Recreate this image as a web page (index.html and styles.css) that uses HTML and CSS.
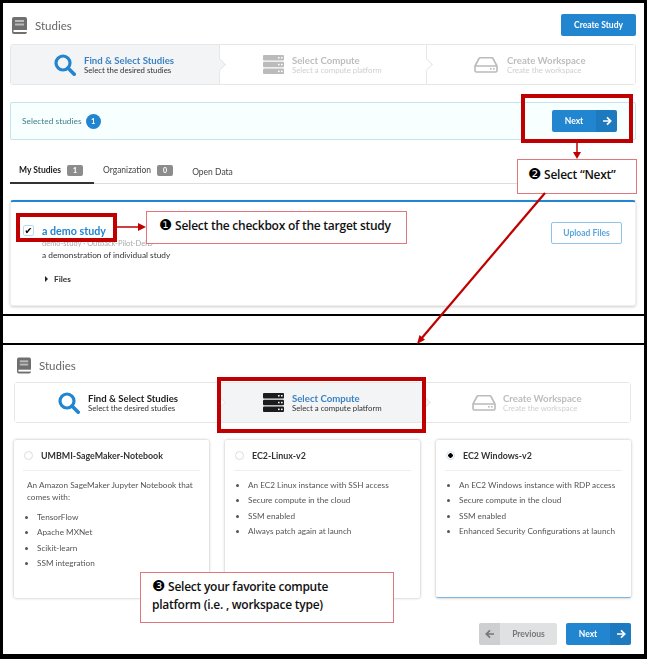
FILE: index.html
```html
<!DOCTYPE html>
<html>
<head>
    <meta charset="utf-8">
    <title>Studies</title>
    <link rel="stylesheet" href="styles.css">
</head>
<body>
    <svg width="0" height="0" class="defs">
        <symbol id="book" viewBox="0 0 15 17">
            <rect width="15" height="17" rx="2" fill="#6f6f6f"/>
            <rect x="3" y="3" width="9" height="2" fill="#bbb"/>
            <rect x="3" y="6.5" width="9" height="2" fill="#bbb"/>
            <rect x="1.5" y="13" width="13.5" height="2" fill="#fff"/>
        </symbol>
        <symbol id="search" viewBox="0 0 22 22">
            <circle cx="9" cy="9" r="7" fill="none" stroke="currentColor" stroke-width="3.2"/>
            <path d="M14 14l6.2 6.2" stroke="currentColor" stroke-width="3.6" stroke-linecap="round"/>
        </symbol>
        <symbol id="server" viewBox="0 0 21 19">
            <g fill="currentColor">
                <rect width="21" height="5.4" rx="1"/>
                <rect y="6.8" width="21" height="5.4" rx="1"/>
                <rect y="13.6" width="21" height="5.4" rx="1"/>
            </g>
            <g fill="#fff">
                <rect x="15" y="2" width="1.6" height="1.5"/><rect x="18" y="2" width="1.6" height="1.5"/>
                <rect x="15" y="8.8" width="1.6" height="1.5"/><rect x="18" y="8.8" width="1.6" height="1.5"/>
                <rect x="15" y="15.6" width="1.6" height="1.5"/><rect x="18" y="15.6" width="1.6" height="1.5"/>
            </g>
        </symbol>
        <symbol id="disk" viewBox="0 0 24 16">
            <path d="M1 9L5 1.5C5.300 1 5.700.8 6.200.8h11.600c.5 0 .9.200 1.200.7L23 9v4.500c0 .9-.7 1.500-1.500 1.500h-19C1.700 15 1 14.400 1 13.500zM1 9h22" fill="none" stroke="currentColor" stroke-width="1.600"/>
            <rect x="16" y="11" width="1.600" height="1.600" fill="currentColor"/>
            <rect x="19" y="11" width="1.600" height="1.600" fill="currentColor"/>
        </symbol>
        <symbol id="arrow" viewBox="0 0 10 10">
            <path d="M1 5h7.500M5 1.300L8.700 5 5 8.700" fill="none" stroke="currentColor" stroke-width="1.700"/>
        </symbol>
    </svg>

    <!-- first screenshot: choosing a study -->
    <section class="panel panel-top">
        <header class="page-head">
            <svg class="book"><use href="#book"/></svg>
            <span class="page-title">Studies</span>
            <button class="btn create">Create Study</button>
        </header>

        <div class="steps">
            <div class="step active">
                <svg class="ico-search"><use href="#search"/></svg>
                <div>
                    <div class="step-title">Find &amp; Select Studies</div>
                    <div class="step-sub">Select the desired studies</div>
                </div>
            </div>
            <div class="step off">
                <svg class="ico-server"><use href="#server"/></svg>
                <div>
                    <div class="step-title">Select Compute</div>
                    <div class="step-sub">Select a compute platform</div>
                </div>
            </div>
            <div class="step off last">
                <svg class="ico-disk"><use href="#disk"/></svg>
                <div>
                    <div class="step-title">Create Workspace</div>
                    <div class="step-sub">Create the workspace</div>
                </div>
            </div>
        </div>

        <div class="selected">
            <span>Selected studies</span>
            <span class="count">1</span>
            <div class="split next">
                <span class="split-label">Next</span>
                <span class="split-arrow"><svg><use href="#arrow"/></svg></span>
            </div>
        </div>

        <nav class="tabs">
            <a class="tab current">My Studies <b>1</b></a>
            <a class="tab">Organization <b>0</b></a>
            <a class="tab plain">Open Data</a>
        </nav>

        <article class="study">
            <div class="study-main">
                <div class="study-name">
                    <span class="check">✔</span>
                    <span>a demo study</span>
                </div>
                <div class="study-id">demo-study · Outback-Pilot-DeID</div>
                <div class="study-desc">a demonstration of individual study</div>
                <div class="study-files"><i></i>Files</div>
            </div>
            <button class="btn outline">Upload Files</button>
        </article>
    </section>

    <div class="strip"></div>

    <!-- second screenshot: choosing a compute platform -->
    <section class="panel panel-bottom">
        <header class="page-head">
            <svg class="book"><use href="#book"/></svg>
            <span class="page-title">Studies</span>
        </header>

        <div class="steps">
            <div class="step done">
                <svg class="ico-search"><use href="#search"/></svg>
                <div>
                    <div class="step-title">Find &amp; Select Studies</div>
                    <div class="step-sub">Select the desired studies</div>
                </div>
            </div>
            <div class="step active dark">
                <svg class="ico-server"><use href="#server"/></svg>
                <div>
                    <div class="step-title">Select Compute</div>
                    <div class="step-sub">Select a compute platform</div>
                </div>
            </div>
            <div class="step off last">
                <svg class="ico-disk"><use href="#disk"/></svg>
                <div>
                    <div class="step-title">Create Workspace</div>
                    <div class="step-sub">Create the workspace</div>
                </div>
            </div>
        </div>

        <div class="cards">
            <div class="card">
                <div class="card-head"><span class="radio"></span>UMBMI-SageMaker-Notebook</div>
                <p>An Amazon SageMaker Jupyter Notebook that comes with:</p>
                <ul>
                    <li>TensorFlow</li>
                    <li>Apache MXNet</li>
                    <li>Scikit-learn</li>
                    <li>SSM integration</li>
                </ul>
            </div>
            <div class="card">
                <div class="card-head"><span class="radio"></span>EC2-Linux-v2</div>
                <ul>
                    <li>An EC2 Linux instance with SSH access</li>
                    <li>Secure compute in the cloud</li>
                    <li>SSM enabled</li>
                    <li>Always patch again at launch</li>
                </ul>
            </div>
            <div class="card picked">
                <div class="card-head"><span class="radio on"></span>EC2 Windows-v2</div>
                <ul>
                    <li>An EC2 Windows instance with RDP access</li>
                    <li>Secure compute in the cloud</li>
                    <li>SSM enabled</li>
                    <li>Enhanced Security Configurations at launch</li>
                </ul>
            </div>
        </div>

        <footer class="actions">
            <div class="split prev">
                <span class="split-arrow"><svg class="flip"><use href="#arrow"/></svg></span>
                <span class="split-label">Previous</span>
            </div>
            <div class="split next">
                <span class="split-label">Next</span>
                <span class="split-arrow"><svg><use href="#arrow"/></svg></span>
            </div>
        </footer>
    </section>

    <!-- annotations drawn on top of the screenshots -->
    <div class="mark mark-next"></div>
    <div class="mark mark-check"></div>
    <div class="mark mark-compute"></div>
    <div class="note note-one"><span class="num">❶</span> Select the checkbox of the target study</div>
    <div class="note note-two"><span class="num">❷</span> Select “Next”</div>
    <div class="note note-three"><span class="num">❸</span> Select your favorite compute<br>platform (i.e. , workspace type)</div>
    <svg class="arrows" width="647" height="659">
        <g stroke="#c00000" fill="none">
            <path d="M117 227H139M577 143V153" stroke-width="1.500"/>
            <path d="M545 193L421 339" stroke-width="2.200"/>
        </g>
        <g fill="#c00000">
            <path d="M146 227l-8-4v8z"/>
            <path d="M577 159l-4-7h8z"/>
            <path d="M417 344l2.500-9 5.500 4.700z"/>
        </g>
    </svg>
</body>
</html>
```

FILE: styles.css
```css
html {
    background: #000;
}

body {
    position: relative;
    margin: 0;
    padding: 3px 3px 0;
    width: 641px;
    height: 656px;
    font-family: Lato, "Open Sans", sans-serif;
    color: #444;
    background: #000;
    overflow: hidden;
}

.defs {
    position: absolute;
}

/* the source picture is a soft, scaled-up screenshot */
.panel {
    background: #fff;
    box-sizing: border-box;
    filter: blur(.35px);
}

.panel-top {
    height: 311px;
    padding: 11px 8px 0 7px;
}

.panel-bottom {
    height: 309px;
    padding: 12px 13px 0 11px;
}

.strip {
    height: 27px;
    margin: 2px 0;
    background: #fff;
}

/* page header */
.page-head {
    display: flex;
    align-items: center;
    height: 22px;
    margin-bottom: 8px;
    padding-left: 2px;
}

.panel-bottom .page-head {
    padding-left: 3px;
    height: 16px;
    margin-bottom: 9px;
}

.book {
    width: 15px;
    height: 17px;
    margin-right: 8px;
}

.panel-bottom .book {
    width: 14px;
    margin-right: 8px;
}

.page-title {
    font-size: 11.500px;
    color: #666;
}

.btn {
    font-family: inherit;
    font-size: 8.500px;
    font-weight: 700;
    border-radius: 2px;
    cursor: pointer;
}

.create {
    margin-left: auto;
    width: 75px;
    height: 22px;
    padding: 0;
    color: #fff;
    background: #2185d0;
    border: none;
}

/* stepper */
.steps {
    display: grid;
    grid-template-columns: 209px 207px 1fr;
    height: 41px;
    border: 1px solid #e6e7e8;
    border-radius: 3px;
    box-sizing: border-box;
}

.panel-bottom .steps {
    grid-template-columns: 205px 205px 1fr;
}

.step {
    position: relative;
    display: flex;
    align-items: center;
    padding-left: 43px;
    border-right: 1px solid #e6e7e8;
}

.step.last {
    padding-left: 47px;
    border-right: none;
}

.step::after {
    content: "";
    position: absolute;
    right: -5px;
    top: 15px;
    width: 8px;
    height: 8px;
    background: inherit;
    border-top: 1px solid #e6e7e8;
    border-right: 1px solid #e6e7e8;
    transform: rotate(45deg);
    z-index: 1;
}

.step.last::after {
    display: none;
}

.step.active {
    background: #f3f4f5;
}

.step:not(.active) {
    background: #fff;
}

.ico-search {
    width: 22px;
    height: 22px;
    margin-right: 8px;
    color: #2185d0;
}

.ico-server {
    width: 21px;
    height: 19px;
    margin-right: 8px;
    color: #1b1c1d;
}

.ico-disk {
    width: 24px;
    height: 16px;
    margin-right: 9px;
    color: #bbb;
}

.panel-bottom .last .ico-disk {
    margin-right: 7px;
}

.step-title {
    font-size: 9.600px;
    line-height: 11px;
    font-weight: 700;
    color: #1b1c1d;
}

.step-sub {
    font-size: 7.800px;
    line-height: 9px;
    color: #333;
}

.active .step-title {
    color: #3b82c4;
}

.off .ico-server {
    color: #bbb;
}

.off .step-title {
    color: #bdbdbd;
}

.off .step-sub {
    color: #cfcfcf;
}

/* selected bar */
.selected {
    display: flex;
    align-items: center;
    height: 38px;
    margin-top: 17px;
    padding: 0 18px 0 11px;
    font-size: 8.400px;
    color: #3d7f8c;
    background: #f8ffff;
    border: 1px solid #c5e3ec;
    border-radius: 2px;
    box-sizing: border-box;
}

.count {
    width: 15px;
    height: 15px;
    margin-left: 4px;
    font-size: 7.500px;
    font-weight: 700;
    line-height: 15px;
    text-align: center;
    color: #fff;
    background: #2185d0;
    border-radius: 50%;
}

.split {
    display: flex;
    height: 22px;
    font-size: 8.500px;
    font-weight: 700;
    line-height: 22px;
    color: #fff;
    background: #2185d0;
    border-radius: 2px;
    overflow: hidden;
}

.selected .split {
    margin-left: auto;
}

.split-label {
    flex: 1;
    text-align: center;
}

.split-arrow {
    display: flex;
    align-items: center;
    justify-content: center;
    width: 21px;
    background: rgba(0, 0, 0, .08);
}

.split-arrow svg {
    width: 10px;
    height: 10px;
}

.split-arrow .flip {
    transform: scaleX(-1);
}

.next {
    width: 65px;
}

.prev {
    width: 78px;
    color: #777;
    background: #e0e1e2;
}

/* tabs */
.tabs {
    display: flex;
    height: 44px;
    align-items: flex-end;
    font-size: 8.500px;
    color: #444;
    border-bottom: 1px solid #ddd;
    box-sizing: border-box;
}

.tab {
    padding: 1px 10px 0 9px;
    height: 20px;
    box-sizing: border-box;
    margin-bottom: -1px;
    white-space: nowrap;
}

.tab.current {
    width: 84px;
    font-weight: 700;
    color: #1b1c1d;
    border-bottom: 2px solid #333;
}

.tab.plain {
    padding-top: 3px;
}

.tab b {
    display: inline-block;
    width: 16px;
    height: 11px;
    margin-left: 4px;
    font-size: 7px;
    line-height: 11px;
    text-align: center;
    color: #fff;
    background: #8c8c8c;
    border-radius: 2px;
}

/* study card */
.study {
    display: flex;
    height: 106px;
    margin-top: 16px;
    padding: 21px 13px 0 12px;
    border: 1px solid #eee;
    border-top: 2px solid #2185d0;
    border-radius: 3px;
    box-shadow: 0 1px 3px rgba(0, 0, 0, .2);
    box-sizing: border-box;
}

.study-main {
    flex: 1;
    font-size: 8.300px;
    color: #333;
}

.study-name {
    display: flex;
    align-items: center;
    height: 14px;
    font-size: 10.700px;
    font-weight: 700;
    color: #2185d0;
}

.check {
    width: 11px;
    height: 11px;
    margin-right: 8px;
    font-family: "DejaVu Sans", sans-serif;
    font-size: 9.500px;
    line-height: 10px;
    text-align: center;
    color: #000;
    background: #fff;
    border: 1px solid #b8dcef;
    border-radius: 2px;
    box-sizing: border-box;
}

.study-id {
    margin: 2px 0 0 19px;
    font-size: 7.500px;
    line-height: 10px;
    color: #aaa;
}

.study-desc {
    margin: 0 0 0 19px;
    line-height: 12px;
}

.study-files {
    display: flex;
    align-items: center;
    margin: 12px 0 0 22px;
    font-weight: 700;
    line-height: 12px;
}

.study-files i {
    width: 0;
    height: 0;
    margin-right: 6px;
    border-left: 3px solid #222;
    border-top: 3px solid transparent;
    border-bottom: 3px solid transparent;
}

.outline {
    width: 71px;
    height: 22px;
    margin-top: -1px;
    padding: 0;
    color: #5aa5dc;
    background: #fff;
    border: 1px solid #8fc3e8;
}

/* compute cards */
.cards {
    display: grid;
    grid-template-columns: repeat(3, 195px);
    gap: 16px;
    margin-top: 17px;
}

.card {
    height: 158px;
    padding: 0 9px;
    font-size: 8.200px;
    color: #555;
    border-radius: 2px;
    box-shadow: 0 0 3px rgba(0, 0, 0, .3);
    box-sizing: border-box;
}

.card.picked {
    border-bottom: 1px solid #7db6e2;
}

.card-head {
    display: flex;
    align-items: center;
    height: 31px;
    padding-top: 1px;
    font-size: 8.900px;
    font-weight: 700;
    color: #333;
    border-bottom: 1px solid #eee;
    box-sizing: border-box;
}

.radio {
    width: 9px;
    height: 9px;
    margin: 0 8px 0 1px;
    background: #fff;
    border: 1px solid #ddd;
    border-radius: 50%;
    box-sizing: border-box;
}

.radio.on {
    background: radial-gradient(circle, #000 0 2px, #fff 2.500px);
    border-color: #cfe3f2;
}

.card p {
    margin: 8px 0 0 4px;
    line-height: 12px;
}

.card ul {
    margin: 7px 0 0;
    padding: 0 0 0 14px;
}

.card li {
    height: 15.300px;
    line-height: 15.300px;
    white-space: nowrap;
}

/* bottom buttons */
.actions {
    display: flex;
    justify-content: flex-end;
    gap: 9px;
    margin-top: 25px;
}

/* red annotations */
.mark {
    position: absolute;
    border: 4px solid #c00000;
    box-sizing: border-box;
}

.mark-next {
    left: 521px;
    top: 94px;
    width: 112px;
    height: 49px;
}

.mark-check {
    left: 16px;
    top: 213px;
    width: 101px;
    height: 29px;
}

.mark-compute {
    left: 217px;
    top: 377px;
    width: 209px;
    height: 56px;
}

.note {
    position: absolute;
    font-family: "Open Sans", sans-serif;
    font-size: 12px;
    font-weight: 600;
    letter-spacing: -.25px;
    color: #111;
    background: #fff;
    border: 1px solid #e0777c;
    box-sizing: border-box;
}

.num {
    font-family: "DejaVu Sans", sans-serif;
    font-size: 15px;
    font-weight: 400;
    color: #000;
}

.note-one {
    left: 146px;
    top: 211px;
    width: 261px;
    height: 33px;
    padding: 4px 0 0 12px;
}

.note-two {
    left: 517px;
    top: 159px;
    width: 120px;
    height: 35px;
    padding: 5px 0 0 10px;
}

.note-three {
    left: 140px;
    top: 572px;
    width: 254px;
    height: 51px;
    padding: 4px 0 0 11px;
    line-height: 18px;
}

.arrows {
    position: absolute;
    left: 0;
    top: 0;
}
```
